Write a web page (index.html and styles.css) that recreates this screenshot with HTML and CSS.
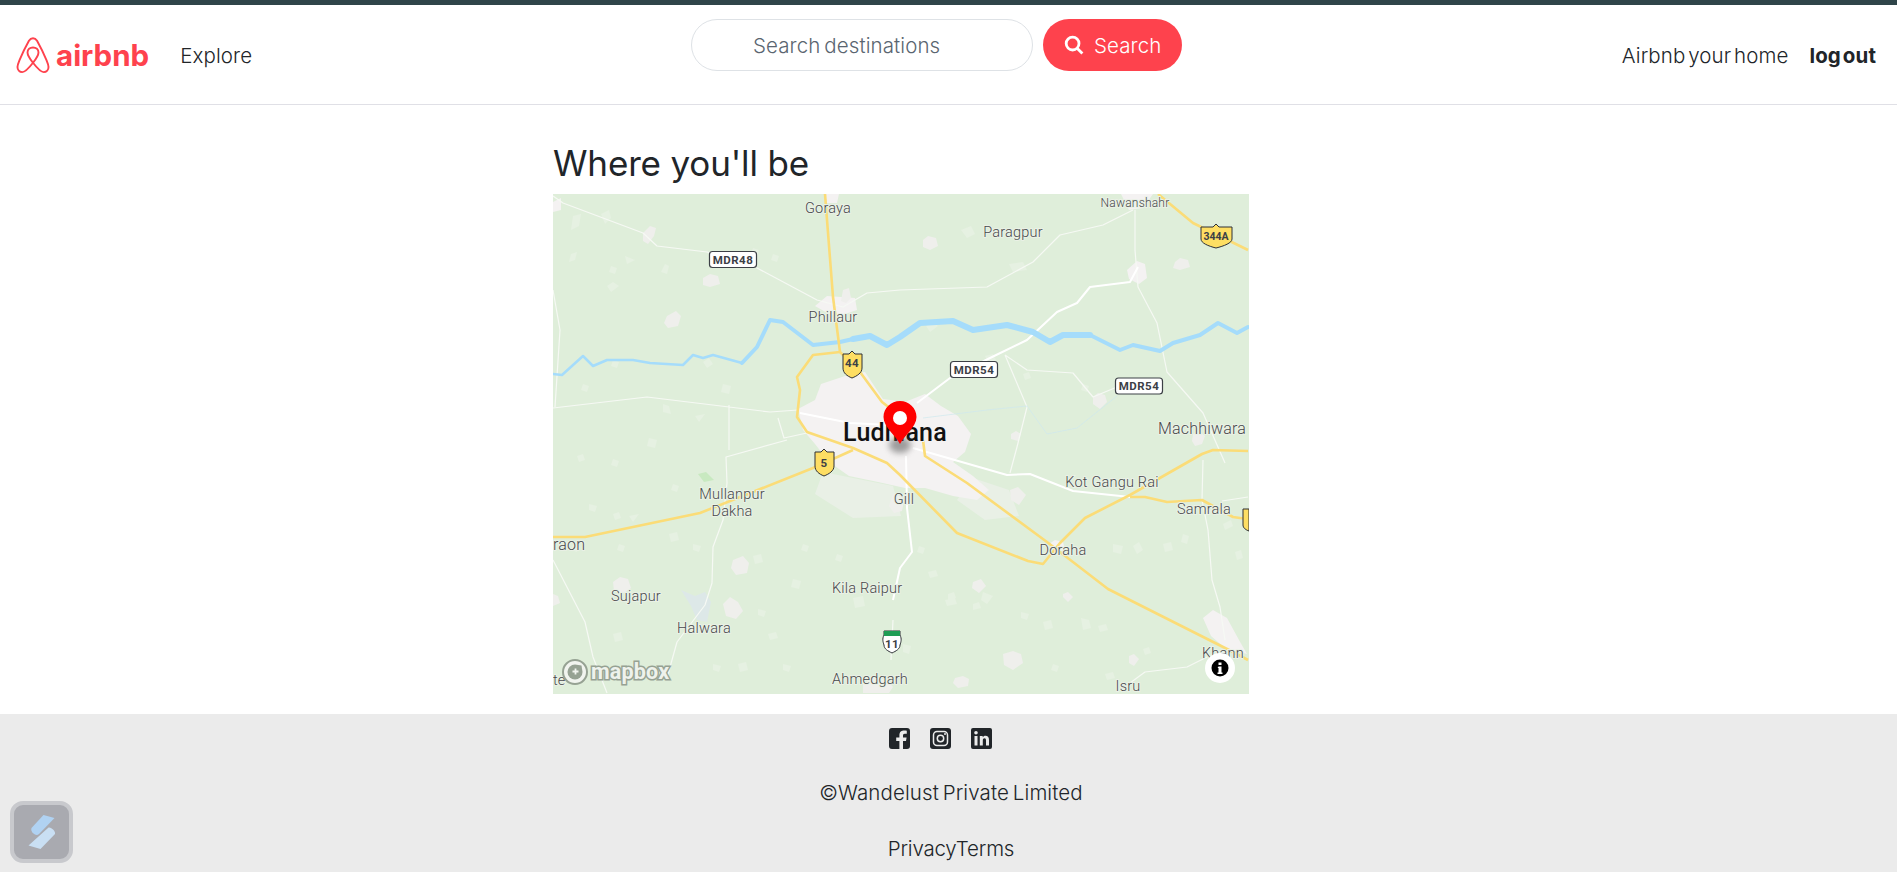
FILE: index.html
```html
<!doctype html>
<html lang="en">
  <head>
    <meta charset="utf-8">
    <meta name="viewport" content="width=device-width, initial-scale=1">
    <title>Where you'll be</title>
    <link rel="stylesheet" href="styles.css">
  </head>
  <body>
    <nav class="navbar">
      <div class="nav-left">
        <a class="brand" href="#">
          <svg class="brand-icon" viewBox="0 0 28 31" aria-hidden="true">
            <path d="M14 21.6C11.2 18 9.4 15.2 9.4 12.9 9.4 10.4 11.4 8.8 14 8.8S18.6 10.4 18.6 12.9C18.6 15.2 16.8 18 14 21.6ZM14 21.6C17.4 26 20.2 29.4 23 29.4 25.4 29.4 27 27.4 27 25.2 27 23.4 26.2 21.6 25.2 19.2 23 14 19.4 6.8 17.4 3.2 16.4 1.6 15.4 1 14 1S11.6 1.6 10.6 3.2C8.6 6.8 5 14 2.8 19.2 1.8 21.6 1 23.4 1 25.2 1 27.4 2.6 29.4 5 29.4 7.8 29.4 10.6 26 14 21.6Z"/>
          </svg>
          <span class="brand-name">airbnb</span>
        </a>
        <a class="nav-link" href="#">Explore</a>
      </div>
      <form class="nav-search">
        <input class="search-input" type="text" placeholder="Search destinations">
        <button class="search-btn" type="button">
          <svg viewBox="0 0 20 20" aria-hidden="true"><circle cx="8.6" cy="8.6" r="6.4"/><path d="M13.4 13.4 18.4 18.4"/></svg>
          <span>Search</span>
        </button>
      </form>
      <div class="nav-right">
        <a class="nav-link" href="#">Airbnb your home</a>
        <a class="nav-link nav-strong" href="#">log out</a>
      </div>
    </nav>

    <main class="listing">
      <h3 class="listing-title">Where you'll be</h3>
      <div class="map">
        <svg class="map-art" viewBox="0 0 696 500" aria-label="Map around Ludhiana">
          <g class="suburbs">
            <path d="M270 278 340 292 348 322 300 324 262 300ZM420 284 456 296 466 322 432 326 404 306Z"/>
          </g>
          <g class="city">
            <path d="M245 215 262 206 268 190 292 182 312 178 330 205 352 208 372 200 388 212 405 222 418 240 412 258 400 268 420 282 436 296 424 306 400 302 372 294 352 294 325 288 296 282 276 268 262 250 250 236Z"/>
            <path d="M272 0h14l-2 9h-10ZM262 112l12-10 28 2 2 12-18 6-10-2ZM568 0h32l-10 14-14 2ZM574 76l10-9 8 3 2 14-8 6-10-5ZM650 424l10-8 14 8 12 22 8 14-22-6-14-12ZM496 350l6-4 8 2 2 8-10 2ZM0 8l8-4v12l-8 2Z"/>
          </g>
          <g class="villages">
            <path d="M90 39l7-7 6 2-2 8-6 8-5-3ZM150 84l7-4 8 2 2 8-10 3-7-2ZM114 122l9-5 5 5-3 10-10 2-4-5ZM290 96l6-2 2 10-5 5-5-2ZM370 46l5-4 8 2 2 8-8 4-7-3ZM622 68l5-4 8 2 2 7-10 3-7-2ZM402 484l8-2 6 3-1 7-10 2-5-5ZM310 490l12-7 12 3 6 7-4 6h-26ZM180 366l10-4 6 7-2 10-11 2-5-7ZM170 410l7-7 8 5 5 9-7 8-10-3ZM60 388l7-5 8 2 3 9-7 5-10-2ZM0 400l5 2 2 7-7 3ZM340 300l8 2 3 5-2 10-8 2-5-7Z"/>
            <path d="M640 240l7-2 5 4-3 8-7 2-3-5ZM540 203l5-4 7 2 2 7-7 7-7-5ZM458 240l5-3 5 3-3 7-7-2ZM457 296l8-3 8 8-7 10-8-5ZM420 388l8-3 5 7-7 7-7-5ZM450 460l10-3 8 3 2 9-10 7-9-5ZM576 462l5-2 5 5-5 7-5-3ZM510 400l5-2 5 5-5 5-5-5Z"/>
          </g>
          <g class="fields">
            <path d="M20 22l8-2-2 12-8 4ZM48 20l8-4 2 8-6 6ZM18 60l6-2-2 8-6 2ZM82 66l-8 4-2-8ZM58 72l6 2-2 6-6-2ZM66 92l-8 6-4-6 6-4ZM112 70l4 2-2 8-6-2ZM200 54l6 2-2 6-6-2ZM220 60l6 2-2 6-6-2ZM60 166l6 2-2 6-6-2ZM160 170l-6 4-4-6 6-4ZM30 190l6 2-2 6-6-2ZM170 190l8 2-2 8-8-2ZM110 210l6 2 2 8-8-2ZM152 220l-6 8-4-6ZM96 244l8 2-2 8-8-2ZM24 262l6-2 2 6-6 2ZM60 265l6 2-2 6-6-2ZM36 310l8 2-2 6-6-2ZM60 320l6-2 2 6-6 2ZM120 290l6 2-2 6-6-2ZM86 320l-6 8-4-6ZM116 340l8-2 2 8-8 2ZM66 350l6 2-2 6-6-2ZM20 350l6 2-2 6-6-2ZM140 350l8 2-2 6-6-2ZM200 362l8-2 2 8-8 2ZM250 350l6 2-2 6-6-2ZM284 360l6 2-2 6-6-2ZM240 385l8 2-2 8-8-2ZM300 404l10-2 2 10-10 2ZM60 440l8-2 2 8-8 2ZM160 470l8 2-2 6-6-2ZM185 470l8-2 2 8-8 2ZM230 470l8 2-2 6-6-2Z"/>
            <path d="M408 36l10-4 4 8-8 4ZM456 70l14-2 4 8-14 2ZM385 132l-8 6-4-6 6-4ZM366 352l6 2-2 6-6-2ZM375 378l8-2 2 6-8 2ZM395 400l6-2 2 6-8 2ZM420 410l6-2 2 6-8 2ZM430 398l10 4-6 8-6-4ZM350 450l8 2-2 8-6-2ZM392 406l10-2 2 6-10 2ZM560 350l10 2-2 8-8-2ZM580 352l6-4 4 8-6 4ZM610 350l8-2 2 8-8 2ZM630 340l6 2-2 8-6-2ZM670 330l8-4 2 6-8 4ZM682 358l6-2 2 8-6 2ZM500 470l6 2-2 6-6-2ZM590 455l6-2 2 6-6 2ZM552 480l8-2 2 6-8 2ZM470 180l6-2 2 6-6 2ZM432 162l8-2 4 8-8 2ZM530 190l6 2-2 6-6-2ZM528 424l8 2 2 8-8 2ZM545 432l8-2 2 6-8 2ZM468 418l8 2-2 6-6-2ZM490 428l8-2 2 8-8 2ZM205 415l8 2-2 6-6-2ZM215 440l8-2 2 6-8 2Z"/>
          </g>
          <path class="park" d="M145 280l8-2 8 8-10 2Z"/>
          <path class="lake" d="M128 396l14 6 10-4 6 10-4 20-10-2-6-14Z"/>

          <g class="roads-minor">
            <path d="M0 2l10 7 80 30 14 13 50 6 50 16 60 32 26 7 24-14 33-3 87-3 46-25 27-27 43-10 30-15"/>
            <path d="M582 16v40l3 37 19 36 10 49 36 41 22 50"/>
            <path d="M0 96l7 40-5 77M0 214l94-11 123 15 28-2M176 211v45M234 246l-61 17 1 26-4 37-10 27-1 36-7 22-28 37-10 36"/>
            <path d="M0 366l32 62 8 35 14 36M452 161l22 15 46 3 20 24 24-10M452 161l22 52-10 40-7 26M225 224l6 20 23-5"/>
            <path d="M650 266l-1 40 6 30 4 50 8 27 5 33M577 489l15-11 42-5 20-10M340 426l-2 40"/>
            <path d="M669 307l26-4"/>
          </g>
          <g class="roads-main">
            <path d="M360 254l94 27 23-1 43 17 57 6"/>
            <path d="M364 209l33-25 40-20 37-18 30-28 20-9 13-16 40-5 8-15"/>
            <path d="M247 219l50 10 40 2"/>
            <path d="M353 262l1 52 5 44-12 16-7 32"/>
          </g>
          <g class="river">
            <path class="river-thin" d="M0 180l9 1 21-19 10 10 14-6 26 0 17 3 33 2 10-10 10 3 10-3 29 8"/>
            <path class="river-mid" d="M189 169l15-16 13-27 13 2 30 23 27-3 13-3"/>
            <path class="river-wide" d="M300 145l17-3 17 9 13-8 20-14 33-2 20 9 34-5 26 7 17 10 13-7 27 0"/>
            <path class="river-mid" d="M537 141l30 15 13-5 27 6 13-8 27-8 18-12 19 10 11-6"/>
          </g>
          <path class="stream" d="M370 224l64-8 40-4 20 28 30-6 40-32"/>
          <g class="roads-hwy">
            <path d="M272 0l8 103 7 55 20 20 22 30 13 10"/>
            <path d="M287 158l-27 3-16 22 3 13-3 27 10 15 46 16 34 15 13 12 57 58 71 28 15 3 17-21 25-25 45-23 72-41 11-4 35 1"/>
            <path d="M0 343h32l115-24 113-45 40-18"/>
            <path d="M370 246l2 16 42 27 80 59 61 47 125 63 15 8"/>
            <path d="M605 0l35 29 55 27"/>
            <path d="M577 303h15l22 5 35-2 31 17 14 2"/>
          </g>

          <g class="shield-box">
            <rect x="156.500" y="57.500" width="47" height="16" rx="3"/>
            <text x="180" y="69.500">MDR48</text>
            <rect x="397.500" y="167.500" width="47" height="16" rx="3"/>
            <text x="421" y="179.500">MDR54</text>
            <rect x="562.500" y="184" width="47" height="16" rx="3"/>
            <text x="586" y="196">MDR54</text>
          </g>
          <g class="shield-hwy">
            <path d="M290 160h6l3-3 3 3h7v14c0 5-5 8-10 10-5-2-9-5-9-10Z"/>
            <text x="299" y="173">44</text>
            <path d="M648 33h12l3-3 3 3h13v12c0 4-8 7-16 9-8-2-15-5-15-9Z"/>
            <text x="663" y="46" class="shield-tight">344A</text>
            <path d="M262 258h6l3-3 3 3h7v14c0 5-5 8-10 10-5-2-9-5-9-10Z"/>
            <text x="271" y="273">5</text>
            <path d="M690 315h6v22c-3-1-6-3-6-6Z"/>
          </g>
          <g class="shield-us">
            <path class="shield-us-body" d="M331 437h16v4c2 4 1 7 0 10 0 4-4 6-8 8-4-2-8-4-8-8-1-3-2-6 0-10Z"/>
            <path class="shield-us-top" d="M331 437h16v5h-16Z"/>
            <text x="339" y="454">11</text>
          </g>

          <g class="labels">
            <text x="275" y="19">Goraya</text>
            <text x="582" y="13" class="label-sm">Nawanshahr</text>
            <text x="460" y="43">Paragpur</text>
            <text x="280" y="128">Phillaur</text>
            <text x="605" y="240" class="label-start label-lg">Machhiwara</text>
            <text x="559" y="293">Kot Gangu Rai</text>
            <text x="651" y="320">Samrala</text>
            <text x="351" y="310">Gill</text>
            <text x="510" y="361">Doraha</text>
            <text x="179" y="305">Mullanpur</text>
            <text x="179" y="322">Dakha</text>
            <text x="0" y="356" class="label-start label-lg">raon</text>
            <text x="83" y="407">Sujapur</text>
            <text x="151" y="439">Halwara</text>
            <text x="279" y="399" class="label-start">Kila Raipur</text>
            <text x="279" y="490" class="label-start">Ahmedgarh</text>
            <text x="575" y="497">Isru</text>
            <text x="649" y="464" class="label-start">Khann</text>
            <text x="0" y="491" class="label-start">te</text>
            <text x="342" y="247" class="label-city">Ludhiana</text>
          </g>

          <ellipse class="pin-shadow" cx="347" cy="251" rx="11" ry="8"/>
          <path class="pin" d="M347 250c-4-8-16.500-17-16.500-27 0-9 7.500-16 16.500-16s16.500 7 16.500 16c0 10-12.500 19-16.500 27Z"/>
          <circle class="pin-hole" cx="347" cy="224" r="7"/>

          <g class="mapbox-mark">
            <circle class="mark-ring" cx="22" cy="478" r="12"/>
            <path class="mark-disc" d="M22 470.500a7.500 7.500 0 1 0 7.500 7.500l-1-6.500Z"/>
            <path class="mark-plus" d="M22.500 474.500v6M19.500 477.500h6"/>
            <text x="38" y="485">mapbox</text>
          </g>
          <circle class="info-bg" cx="667" cy="474" r="15"/>
          <circle class="info-dot" cx="667" cy="474" r="8.500"/>
          <path class="info-i" d="M665.500 472.500h3v6h1v1.500h-5v-1.500h1v-4.500h-1ZM665.500 468.500h3v2.500h-3Z"/>
        </svg>
      </div>
    </main>

    <footer class="site-footer">
      <div class="socials">
        <svg viewBox="0 0 21 21" aria-hidden="true">
          <path d="M3 0h15a3 3 0 0 1 3 3v15a3 3 0 0 1-3 3h-4v-8h3l.6-3.500H14V7.600c0-1 .5-1.800 1.800-1.800h2V2.800c-3.800-.6-7.400-.2-7.400 4.500v2.200H7.200V13h3.200v8H3a3 3 0 0 1-3-3V3a3 3 0 0 1 3-3Z"/>
        </svg>
        <svg viewBox="0 0 21 21" aria-hidden="true">
          <rect width="21" height="21" rx="3"/>
          <rect class="cut" x="3.500" y="3.500" width="14" height="14" rx="3.500"/>
          <circle class="cut" cx="10.500" cy="10.500" r="3.200"/>
          <circle class="dot" cx="15" cy="6" r="1"/>
        </svg>
        <svg viewBox="0 0 21 21" aria-hidden="true">
          <path fill-rule="evenodd" d="M2 0h17a2 2 0 0 1 2 2v17a2 2 0 0 1-2 2H2a2 2 0 0 1-2-2V2a2 2 0 0 1 2-2ZM3.500 8v9.500h3V8ZM5 3a1.800 1.800 0 1 0 0 3.600A1.800 1.800 0 0 0 5 3Zm3.800 5v9.500h3v-5c0-1.400.6-2.200 1.700-2.200s1.500.8 1.500 2.200v5h3v-5.600c0-2.800-1.400-4.100-3.500-4.100-1.300 0-2.200.6-2.800 1.500V8Z"/>
        </svg>
      </div>
      <p class="copyright">&copy;Wandelust Private Limited</p>
      <div class="footer-links">
        <a href="#">Privacy</a><a href="#">Terms</a>
      </div>
    </footer>

    <div class="float-badge">
      <svg viewBox="0 0 38 38" aria-hidden="true">
        <path class="badge-a" d="M20.500 2 31.500 5 16 21c-3 3-9-2-7.500-6Z"/>
        <path class="badge-b" d="M25 15c2-2 8 3 7 6L17.500 36 5.500 32.500Z"/>
      </svg>
    </div>
  </body>
</html>
```

FILE: styles.css
```css
* {
  box-sizing: border-box;
}
body {
  margin: 0;
  background-color: #fff;
  color: #212529;
  font-family: Inter, "Open Sans", sans-serif;
  font-size: 20.500px;
  font-weight: 300;
  letter-spacing: 0.1px;
  word-spacing: -2px;
}
a {
  color: inherit;
  text-decoration: none;
}

.navbar {
  display: grid;
  grid-template-columns: 675px 491px 1fr;
  height: 105px;
  border-top: 5px solid #2f4549;
  border-bottom: 1px solid #e0e0e6;
  padding: 0 21px 0 16px;
}
.nav-left {
  display: flex;
  align-items: center;
  gap: 31px;
  height: 100px;
}
.brand {
  display: flex;
  align-items: center;
  gap: 6px;
  color: #fe424d;
}
.brand-icon {
  width: 34px;
  height: 37px;
  fill: none;
  stroke: #fe424d;
  stroke-width: 1.600;
}
.brand-name {
  font-size: 29.500px;
  font-weight: 700;
  letter-spacing: 0;
}
.nav-search {
  display: flex;
  gap: 10px;
  margin: 14px 0 0;
  height: 52px;
}
.search-input {
  width: 342px;
  height: 52px;
  border: 1px solid #dee2e6;
  border-radius: 26px;
  padding: 0 16px 0 61px;
  font: inherit;
  letter-spacing: inherit;
  word-spacing: inherit;
  font-weight: 300;
}
.search-input::placeholder {
  color: #5a6570;
  opacity: 1;
}
.search-btn {
  display: flex;
  align-items: center;
  gap: 10px;
  width: 139px;
  height: 52px;
  border: 0;
  border-radius: 26px;
  padding: 0 0 0 21px;
  background-color: #fe424d;
  color: #fff;
  font: inherit;
  letter-spacing: inherit;
}
.search-btn svg {
  width: 20px;
  height: 20px;
  fill: none;
  stroke: #fff;
  stroke-width: 2.800;
}
.nav-right {
  display: flex;
  align-items: center;
  justify-content: flex-end;
  gap: 21px;
  height: 100px;
  word-spacing: -3px;
}
.nav-strong {
  font-weight: 700;
}

.listing {
  width: 696px;
  margin-left: 553px;
  padding-bottom: 20px;
}
.listing-title {
  margin: 0;
  padding-top: 37px;
  height: 89px;
  font-size: 35px;
  font-weight: 400;
  line-height: 42px;
  letter-spacing: -0.15px;
  word-spacing: 0;
}
.map {
  width: 696px;
  height: 500px;
  overflow: hidden;
  background-color: #dfeeda;
}
.map-art {
  display: block;
  width: 696px;
  height: 500px;
  font-family: Roboto, "Noto Sans", sans-serif;
  letter-spacing: 0;
  word-spacing: 0;
}
.suburbs path {
  fill: #e9f0e6;
}
.city path {
  fill: #f4f2f2;
}
.villages path {
  fill: #efefec;
  filter: blur(0.6px);
}
.fields path {
  fill: #e6f1e2;
  filter: blur(0.5px);
}
.park {
  fill: #c8e9c0;
}
.lake {
  fill: #dde8e8;
}
.roads-minor path {
  fill: none;
  stroke: #f6f9f4;
  stroke-width: 1.200;
  stroke-linejoin: round;
}
.roads-main path {
  fill: none;
  stroke: #fff;
  stroke-width: 2;
  stroke-linejoin: round;
}
.roads-hwy path {
  fill: none;
  stroke: #fbdc77;
  stroke-width: 2.600;
  stroke-linejoin: round;
}
.river path {
  fill: none;
  stroke: #a5dcfb;
  stroke-linejoin: round;
  stroke-linecap: round;
}
.river .river-thin {
  stroke-width: 2.500;
}
.river .river-mid {
  stroke-width: 4;
}
.river .river-wide {
  stroke-width: 6;
}
.stream {
  fill: none;
  stroke: #cfe8ee;
  stroke-width: 0.700;
}
.shield-box rect {
  fill: #fff;
  stroke: #3c4046;
  stroke-width: 1.200;
}
.shield-box text,
.shield-hwy text,
.shield-us text {
  fill: #3c4046;
  font-size: 11.500px;
  font-weight: 700;
  text-anchor: middle;
  letter-spacing: 0.5px;
}
.shield-hwy .shield-tight {
  font-size: 10.500px;
  letter-spacing: 0;
}
.shield-hwy path {
  fill: #fede63;
  stroke: #2e3136;
  stroke-width: 1;
}
.shield-us-body {
  fill: #fff;
  stroke: #2e3136;
  stroke-width: 1;
}
.shield-us-top {
  fill: #1f9d55;
}
.labels text {
  fill: #47484a;
  stroke: #eaf1e6;
  stroke-width: 2px;
  paint-order: stroke;
  font-size: 14.500px;
  letter-spacing: 0.2px;
  text-anchor: middle;
}
.labels .label-sm {
  font-size: 12px;
}
.labels .label-lg {
  font-size: 16px;
}
.labels .label-start {
  text-anchor: start;
}
.labels .label-city {
  fill: #111;
  stroke: #f4f2f2;
  font-size: 25px;
  font-weight: 500;
}
.pin-shadow {
  fill: #555;
  opacity: 0.55;
  filter: blur(3px);
}
.pin {
  fill: #f00;
}
.pin-hole {
  fill: #fff;
}
.mark-ring {
  fill: #f1f4ef;
  stroke: #96a293;
  stroke-width: 2;
}
.mark-disc {
  fill: #96a293;
}
.mark-plus {
  fill: none;
  stroke: #f1f4ef;
  stroke-width: 1.800;
}
.mapbox-mark text {
  fill: #eef2ec;
  stroke: #96a293;
  stroke-width: 3px;
  paint-order: stroke;
  font-size: 21.500px;
  font-weight: 700;
  letter-spacing: 0.2px;
}
.info-bg {
  fill: #fff;
}
.info-dot {
  fill: #000;
}
.info-i {
  fill: #fff;
}

.site-footer {
  display: flex;
  flex-direction: column;
  align-items: center;
  height: 158px;
  background-color: #ebebeb;
}
.socials {
  display: flex;
  gap: 20px;
  margin: 14px 16px 0 0;
}
.socials svg {
  width: 21px;
  height: 21px;
  fill: #212529;
}
.socials .cut {
  fill: none;
  stroke: #ebebeb;
  stroke-width: 1.500;
}
.socials .dot {
  fill: #ebebeb;
}
.copyright {
  margin: 29px 0 0 5px;
  line-height: 29px;
}
.footer-links {
  margin: 27px 0 0 5px;
  line-height: 29px;
  letter-spacing: -0.2px;
}

.float-badge {
  position: fixed;
  left: 10px;
  bottom: 9px;
  display: flex;
  align-items: center;
  justify-content: center;
  width: 63px;
  height: 62px;
  border: 4px solid #c8c9cd;
  border-radius: 13px;
  background-color: #a9aab0;
}
.float-badge svg {
  width: 38px;
  height: 38px;
  flex: none;
}
.badge-a {
  fill: #b0d2f2;
}
.badge-b {
  fill: #c9dff3;
}
```
